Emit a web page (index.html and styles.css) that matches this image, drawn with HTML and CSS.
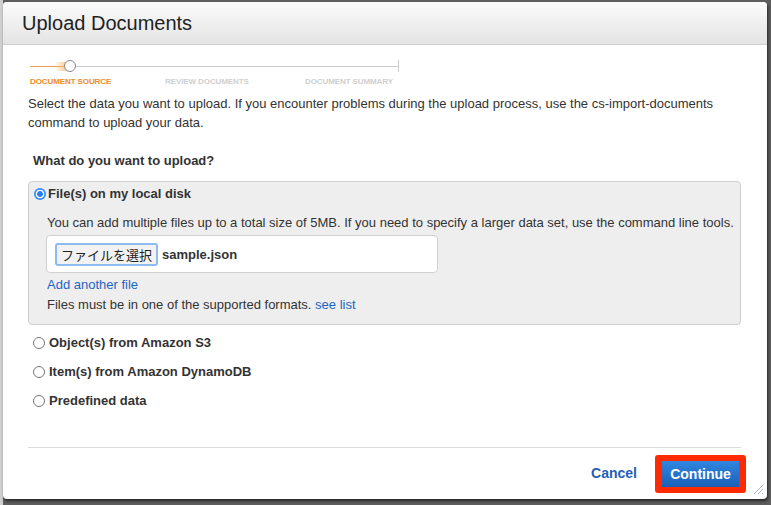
FILE: index.html
```html
<!DOCTYPE html>
<html>
<head>
<meta charset="utf-8">
<link rel="stylesheet" href="styles.css">
</head>
<body>
<div class="dialog">
  <div class="header"><h1 class="title">Upload Documents</h1></div>
  <div class="content">
    <div class="stepper">
      <div class="track">
        <span class="done"></span>
        <span class="knob"></span>
        <span class="tick"></span>
      </div>
      <div class="labels">
        <span class="lbl active">DOCUMENT SOURCE</span>
        <span class="lbl l2">REVIEW DOCUMENTS</span>
        <span class="lbl">DOCUMENT SUMMARY</span>
      </div>
    </div>
    <p class="intro">Select the data you want to upload. If you encounter problems during the upload process, use the cs-import-documents command to upload your data.</p>
    <h2 class="question">What do you want to upload?</h2>
    <div class="panel">
      <div class="opt"><span class="radio on"></span><span class="optlabel">File(s) on my local disk</span></div>
      <p class="hint">You can add multiple files up to a total size of 5MB. If you need to specify a larger data set, use the command line tools.</p>
      <div class="filebox"><span class="filebtn">ファイルを選択</span><span class="filename">sample.json</span></div>
      <a class="link addfile">Add another file</a>
      <p class="formats">Files must be in one of the supported formats. <a class="link">see list</a></p>
    </div>
    <div class="opt outer first"><span class="radio"></span><span class="optlabel">Object(s) from Amazon S3</span></div>
    <div class="opt outer"><span class="radio"></span><span class="optlabel">Item(s) from Amazon DynamoDB</span></div>
    <div class="opt outer last"><span class="radio"></span><span class="optlabel">Predefined data</span></div>
    <div class="sep"></div>
    <div class="footer">
      <a class="cancel">Cancel</a>
      <span class="highlight"><span class="continue">Continue</span></span>
    </div>
  </div>
  <svg class="grip" width="12" height="12" viewBox="0 0 12 12">
    <path d="M11 2 L2 11 M11 6 L6 11 M11 10 L10 11" stroke="#aab4c8" stroke-width="1" fill="none"/>
  </svg>
</div>
</body>
</html>
```
FILE: styles.css
```css
html, body {
  margin: 0;
  padding: 0;
  height: 505px;
  overflow: hidden;
}
body {
  background: linear-gradient(to right, #d0d0d0 0, #d0d0d0 3px, #5e5e5e 3px);
  font-family: "Liberation Sans", Arial, sans-serif;
  color: #333;
}
.dialog {
  position: relative;
  margin: 2px 0 0 3px;
  width: 764px;
  height: 497px;
  background: #fff;
  border-radius: 4px;
  box-shadow: 1px 2px 3px rgba(0,0,0,0.6);
  overflow: hidden;
}
.header {
  height: 42px;
  background: linear-gradient(#fbfbfb, #e4e4e4);
  border-bottom: 1px solid #cfcfcf;
  padding-left: 19px;
  display: flex;
  align-items: center;
}
.title {
  margin: 0;
  font-size: 20px;
  font-weight: normal;
  color: #222;
  padding-top: 1px;
}
.content {
  padding: 15px 26px 0 25px;
}
.stepper {
  margin-left: 2px;
  width: 372px;
}
.track {
  position: relative;
  height: 13px;
  background: linear-gradient(#ccc, #ccc) no-repeat 0 6px / 368px 1px;
}
.done {
  position: absolute;
  left: 0;
  top: 6px;
  width: 38px;
  height: 1px;
  background: #f0a050;
}
.done::after {
  content: "";
  position: absolute;
  right: -2px;
  top: -4px;
  width: 16px;
  height: 9px;
  background: linear-gradient(to right, rgba(247,170,90,0), rgba(247,170,90,0.8));
  border-radius: 4px 0 0 4px;
}
.knob {
  position: absolute;
  left: 34px;
  top: 0;
  width: 10px;
  height: 10px;
  border: 1.5px solid #888;
  border-radius: 50%;
  background: #fff;
}
.tick {
  position: absolute;
  left: 368px;
  top: 0;
  width: 1px;
  height: 12px;
  background: #ccc;
}
.labels {
  display: flex;
  margin-top: 2px;
  height: 12px;
  align-items: center;
}
.lbl {
  flex: none;
  font-size: 8px;
  font-weight: bold;
  color: #cfcfcf;
  letter-spacing: -0.1px;
  width: 140px;
  white-space: nowrap;
}
.lbl.active {
  color: #ee8a2a;
  width: 135px;
}
.intro {
  margin: 7px 0 0;
  font-size: 13px;
  line-height: 19px;
  color: #333;
}
.question {
  margin: 19px 0 0 5px;
  font-size: 13px;
  line-height: 19px;
  font-weight: bold;
  color: #333;
}
.panel {
  margin-top: 11px;
  background: #eeeeee;
  border: 1px solid #cfcfcf;
  border-radius: 4px;
  padding: 2px 6px 9px 5px;
  display: flex;
  flex-direction: column;
  align-items: flex-start;
}
.opt {
  display: flex;
  align-items: center;
  height: 19px;
}
.opt.outer {
  margin: 10px 0 0 5px;
}
.opt.outer.first {
  margin-top: 8px;
}
.opt.outer.last {
  margin-top: 10px;
}
.radio {
  width: 10px;
  height: 10px;
  border: 1px solid #777;
  border-radius: 50%;
  background: #fff;
  margin-right: 4px;
  box-sizing: content-box;
}
.radio.on {
  width: 12px;
  height: 12px;
  border: 0;
  background: radial-gradient(circle, #2a7ef0 0 2.6px, #fff 3.2px 4px, #3a8cf5 4.6px);
  margin-right: 2px;
}
.optlabel {
  font-size: 13px;
  font-weight: bold;
  color: #333;
}
.hint {
  margin: 10px 0 0 13px;
  font-size: 13px;
  line-height: 19px;
}
.filebox {
  margin: 3px 0 0 12px;
  width: 382px;
  height: 36px;
  background: #fff;
  border: 1px solid #d0d0d0;
  border-radius: 4px;
  display: flex;
  align-items: center;
  padding-left: 8px;
}
.filebtn {
  font-family: "Noto Sans CJK JP", "Liberation Sans", sans-serif;
  font-size: 13px;
  line-height: 19px;
  color: #222;
  background: #f2f2f2;
  border: 2px solid #8cbcf0;
  border-radius: 3px;
  padding: 0 4px;
}
.filename {
  margin-left: 4px;
  font-size: 13px;
  font-weight: bold;
  color: #333;
}
.link {
  color: #1f64c2;
}
.addfile {
  margin: 2px 0 0 13px;
  font-size: 13px;
  line-height: 20px;
}
.formats {
  margin: 0 0 0 13px;
  font-size: 13px;
  line-height: 20px;
}
.sep {
  margin-top: 37px;
  height: 1px;
  background: #dcdcdc;
}
.footer {
  display: flex;
  justify-content: flex-end;
  align-items: center;
  margin-top: 7px;
  margin-right: -5px;
}
.cancel {
  font-size: 14px;
  font-weight: bold;
  color: #1f5fb8;
  margin-right: 18px;
  margin-top: -2px;
}
.highlight {
  background: #ff2a00;
  border-radius: 3px;
  padding: 6px 7px;
  display: flex;
}
.continue {
  width: 77px;
  height: 26px;
  display: flex;
  align-items: center;
  justify-content: center;
  background: linear-gradient(#2f86e0, #1b60b8);
  color: #fff;
  font-size: 14px;
  font-weight: bold;
}
.grip {
  position: absolute;
  right: 3px;
  bottom: 4px;
}
```
